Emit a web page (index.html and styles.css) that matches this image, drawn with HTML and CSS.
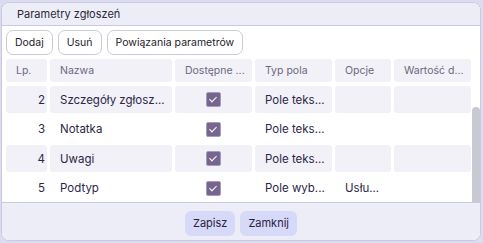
FILE: index.html
```html
<!DOCTYPE html>
<html lang="pl">
<head>
  <meta charset="UTF-8">
  <title>Parametry zgłoszeń</title>
  <link rel="stylesheet" href="styles.css">
</head>
<body>
  <div class="dialog">
    <div class="dialog-title">Parametry zgłoszeń</div>

    <div class="dialog-body">
      <div class="toolbar">
        <button class="tool-btn">Dodaj</button>
        <button class="tool-btn">Usuń</button>
        <button class="tool-btn">Powiązania parametrów</button>
      </div>

      <div class="grid-wrap">
        <div class="grid grid-head">
          <div class="cell">Lp.</div>
          <div class="cell">Nazwa</div>
          <div class="cell">Dostępne ...</div>
          <div class="cell">Typ pola</div>
          <div class="cell">Opcje</div>
          <div class="cell">Wartość d...</div>
        </div>

        <div class="grid-scroll">
          <div class="grid grid-rows">
            <div class="cell num shade">2</div>
            <div class="cell shade">Szczegóły zgłosz...</div>
            <div class="cell center shade"><span class="check"></span></div>
            <div class="cell shade">Pole teks...</div>
            <div class="cell shade"></div>
            <div class="cell shade"></div>

            <div class="cell num">3</div>
            <div class="cell">Notatka</div>
            <div class="cell center"><span class="check"></span></div>
            <div class="cell">Pole teks...</div>
            <div class="cell"></div>
            <div class="cell"></div>

            <div class="cell num shade">4</div>
            <div class="cell shade">Uwagi</div>
            <div class="cell center shade"><span class="check"></span></div>
            <div class="cell shade">Pole teks...</div>
            <div class="cell shade"></div>
            <div class="cell shade"></div>

            <div class="cell num">5</div>
            <div class="cell">Podtyp</div>
            <div class="cell center"><span class="check"></span></div>
            <div class="cell">Pole wyb...</div>
            <div class="cell">Usłu...</div>
            <div class="cell"></div>
          </div>
          <div class="scroll-thumb"></div>
        </div>
      </div>
    </div>

    <div class="dialog-foot">
      <button class="foot-btn">Zapisz</button>
      <button class="foot-btn">Zamknij</button>
    </div>
  </div>
</body>
</html>
```

FILE: styles.css
```css
html, body { margin: 0; height: 100%; }
body { background: #dcdcf1; font-family: Inter, "Noto Sans", sans-serif; font-size: 11px; color: #2d2747; }

.dialog { margin: 2px 2px 2px 1px; height: 237px; border: 1px solid #c9c9e2; border-radius: 8px; background: #fff; display: flex; flex-direction: column; overflow: hidden; }

.dialog-title { height: 22px; line-height: 22px; padding-left: 15px; background: #ededf7; border-bottom: 1px solid #c9c9e2; color: #2b2838; font-size: 11px; }

.dialog-body { flex: 1; padding: 4px 0 0 4px; display: flex; flex-direction: column; }

.toolbar { display: flex; gap: 5px; }
.tool-btn { height: 25px; padding: 0 8px; background: #fff; border: 1px solid #cbcad9; border-radius: 7px; font: inherit; font-size: 10.5px; color: #1f1c2c; }

.grid-wrap { margin-top: 4px; position: relative; flex: 1; display: flex; flex-direction: column; }
.grid { display: grid; grid-template-columns: 41px 122px 77px 77px 56px 77px; column-gap: 3px; }
.grid-head .cell { height: 23px; background: #f2f1f7; color: #6c6880; border-radius: 3px; padding-left: 10px; font-size: 10.5px; }
.grid-scroll { flex: 1; position: relative; overflow: hidden; padding-top: 4px; }
.grid-rows { grid-auto-rows: 27px; row-gap: 2.5px; }

.cell { display: flex; align-items: center; padding-left: 10px; white-space: nowrap; overflow: hidden; }
.cell.shade { background: #f2f1f7; border-radius: 3px; }
.cell.num { justify-content: flex-end; padding: 0 2px 0 0; }
.cell.center { justify-content: center; padding: 0; }
.grid-rows .cell { font-size: 11.5px; }

.check { width: 13px; height: 13px; border: 1px solid #a79bbd; border-radius: 2px; background: #76668f; position: relative; }
.check::after { content: ""; position: absolute; left: 4px; top: 2px; width: 3px; height: 6px; border: solid #fff; border-width: 0 1.5px 1.5px 0; transform: rotate(45deg); }

.scroll-thumb { position: absolute; right: 0; top: 25px; bottom: 0; width: 8px; background: #c9c9d3; border-radius: 4px 4px 0 0; }

.dialog-foot { height: 40px; border-top: 1px solid #c9c9e2; background: #ededf7; display: flex; justify-content: center; align-items: flex-start; gap: 5px; padding-top: 8px; box-sizing: border-box; }
.foot-btn { height: 25px; padding: 0 8px; background: #d7d9f8; border: none; border-radius: 6px; font: inherit; color: #2a2340; }
```
